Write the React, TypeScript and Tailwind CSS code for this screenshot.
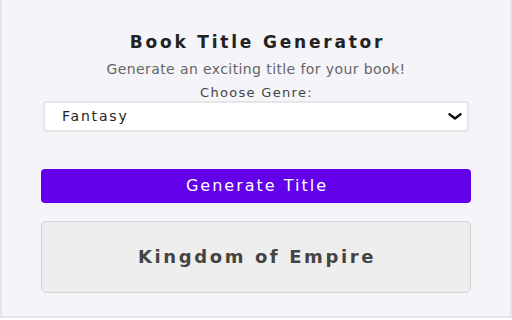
import React, { useState } from "react";

export default function App() {
  const [genre, setGenre] = useState("Fantasy");
  return (
    <div className="w-[512px] h-[320px] bg-white overflow-hidden" style={{ fontFamily: '"DejaVu Sans", Arial, sans-serif' }}>
      <div className="h-[318px] bg-[#f4f4f9] border-x-2 border-b-2 border-[#e3e3e8] flex flex-col px-[39px] pt-[32px]">
        <h1 className="text-[17px] leading-[20px] font-bold text-[#222] text-center tracking-[2.8px] pl-[3px]">
          Book Title Generator
        </h1>
        <p className="mt-[9px] text-[14px] leading-[16px] text-[#666] text-center tracking-[0.4px]">
          Generate an exciting title for your book!
        </p>
        <label className="mt-[8px] text-[13px] leading-[15px] text-[#444] text-center tracking-[1.3px] pl-[1px]">
          Choose Genre:
        </label>
        <div className="relative mt-[1px] mx-[2px]">
          <select
            value={genre}
            onChange={(e) => setGenre(e.target.value)}
            className="appearance-none w-full h-[31px] bg-white border-2 border-[#e6e6e6] rounded-[4px] pl-[17px] text-[14px] text-[#222] tracking-[1.8px] outline-none"
            style={{ fontFamily: '"DejaVu Sans", Arial, sans-serif' }}
          >
            <option>Fantasy</option>
            <option>Science Fiction</option>
            <option>Mystery</option>
            <option>Romance</option>
          </select>
          <svg
            className="absolute right-[7px] top-[12px] pointer-events-none"
            width="14"
            height="7"
            viewBox="0 0 14 7"
          >
            <path d="M1.5 1.2 L7 5.5 L12.5 1.2" fill="none" stroke="#111" strokeWidth="2.4" strokeLinecap="round" strokeLinejoin="round" />
          </svg>
        </div>
        <button className="mt-[37px] h-[34px] w-full bg-[#6200ea] text-white rounded-[4px] text-[16px] tracking-[2px] pl-[2px]">
          Generate Title
        </button>
        <div className="mt-[18px] h-[72px] w-full bg-[#eeeeee] border border-[#d4d4d4] rounded-[5px] flex items-center justify-center">
          <span className="text-[18px] font-bold text-[#444] tracking-[2.6px] pl-[2px] -mt-[2px]">Kingdom of Empire</span>
        </div>
      </div>
    </div>
  );
}
